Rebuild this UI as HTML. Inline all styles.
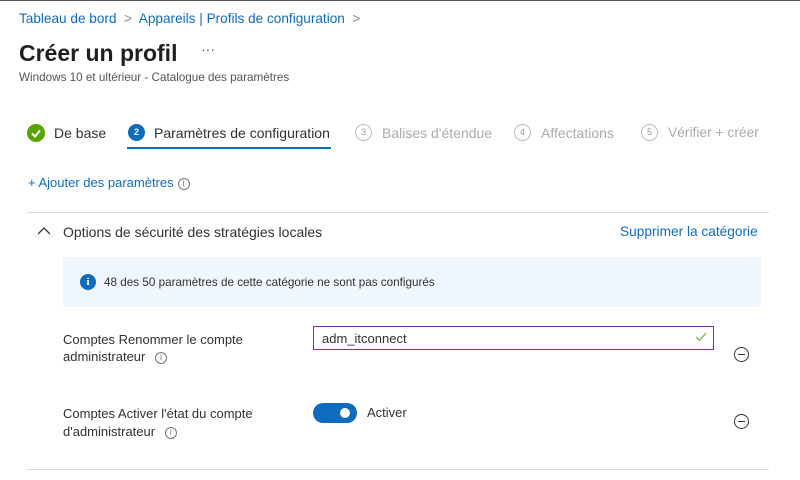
<!DOCTYPE html>
<html><head><meta charset="utf-8"><style>
*{margin:0;padding:0;box-sizing:border-box}
body{width:800px;height:480px;background:#fff;font-family:"Liberation Sans",sans-serif;color:#323130;position:relative;overflow:hidden;border-top:1px solid #555}
.a{position:absolute;white-space:nowrap}
.blue{color:#0f6cbd}
.circ{position:absolute;width:17px;height:17px;border-radius:50%;border:1px solid #bbb;color:#999;font-size:9px;text-align:center;line-height:15px}
.info{display:inline-block;width:12px;height:12px;border:1px solid #777;border-radius:50%;font-size:8px;line-height:10px;text-align:center;color:#666;vertical-align:middle;margin-left:4px}
.minus{position:absolute;width:15px;height:15px;border:1.3px solid #333;border-radius:50%}
.minus:after{content:"";position:absolute;left:3px;right:3px;top:6px;height:1.3px;background:#333}
</style></head><body>
<div class="a blue" style="left:19px;top:10px;font-size:13.6px">Tableau de bord <span style="color:#888">&nbsp;&gt;&nbsp;</span> Appareils | Profils de configuration <span style="color:#888">&nbsp;&gt;</span></div>
<div class="a" style="left:19px;top:39px;font-size:23px;font-weight:bold;color:#201f1e">Créer un profil</div>
<div class="a" style="left:201px;top:40px;font-size:14px;color:#555">···</div>
<div class="a" style="left:19px;top:70px;font-size:11.7px;color:#555">Windows 10 et ultérieur - Catalogue des paramètres</div>

<div class="a" style="left:27px;top:123px;width:18px;height:18px;border-radius:50%;background:#57a300"><svg width="18" height="18"><path d="M5 9.5l3 3 5-6" stroke="#fff" stroke-width="2" fill="none"/></svg></div>
<div class="a" style="left:54px;top:124px;font-size:14px">De base</div>
<div class="a" style="left:128px;top:123px;width:17px;height:17px;border-radius:50%;background:#0f6cbd;color:#fff;font-size:9px;text-align:center;line-height:17px;font-weight:bold">2</div>
<div class="a" style="left:154px;top:124px;font-size:14px">Paramètres de configuration</div>
<div class="a" style="left:127px;top:146px;width:204px;height:2px;background:#0f6cbd"></div>
<div class="circ" style="left:355px;top:123px">3</div>
<div class="a" style="left:382px;top:124px;font-size:14px;color:#aaa">Balises d'étendue</div>
<div class="circ" style="left:514px;top:123px">4</div>
<div class="a" style="left:541px;top:124px;font-size:14px;color:#aaa">Affectations</div>
<div class="circ" style="left:641px;top:123px">5</div>
<div class="a" style="left:668px;top:124px;font-size:13.8px;color:#aaa">Vérifier + créer</div>

<div class="a blue" style="left:28px;top:174px;font-size:13px">+ Ajouter des paramètres<span class="info">i</span></div>

<div class="a" style="left:27px;top:211px;width:742px;height:1px;background:#ddd"></div>
<svg class="a" style="left:37px;top:225px" width="14" height="10"><path d="M1 8l6-6 6 6" stroke="#333" stroke-width="1.3" fill="none"/></svg>
<div class="a" style="left:63px;top:223px;font-size:14px">Options de sécurité des stratégies locales</div>
<div class="a blue" style="left:620px;top:223px;font-size:13.7px">Supprimer la catégorie</div>

<div class="a" style="left:63px;top:256px;width:698px;height:50px;background:#eff6fe"></div>
<div class="a" style="left:80px;top:273px;width:16px;height:16px;border-radius:50%;background:#0f6cbd;color:#fff;font-size:11px;font-weight:bold;text-align:center;line-height:16px;font-family:'Liberation Serif',serif">i</div>
<div class="a" style="left:104px;top:275px;font-size:11.7px">48 des 50 paramètres de cette catégorie ne sont pas configurés</div>

<div class="a" style="left:63px;top:330px;font-size:13px;line-height:17px">Comptes Renommer le compte<br>administrateur <span class="info" style="margin-left:6px">i</span></div>
<div class="a" style="left:313px;top:325px;width:401px;height:24px;border:1px solid #8a2aa6"></div>
<div class="a" style="left:322px;top:330px;font-size:13px">adm_itconnect</div>
<svg class="a" style="left:695px;top:331px" width="12" height="10"><path d="M1 5l3.5 3.5L11 1" stroke="#6bb33a" stroke-width="1.2" fill="none"/></svg>
<div class="minus" style="left:734px;top:346px"></div>

<div class="a" style="left:63px;top:404px;font-size:13px;line-height:18px">Comptes Activer l'état du compte<br>d'administrateur <span class="info" style="margin-left:6px">i</span></div>
<div class="a" style="left:313px;top:402px;width:44px;height:20px;border-radius:10px;background:#0f6cbd"><div style="position:absolute;left:27px;top:5px;width:10px;height:10px;border-radius:50%;background:#fff"></div></div>
<div class="a" style="left:367px;top:404px;font-size:13px">Activer</div>
<div class="minus" style="left:734px;top:413px"></div>

<div class="a" style="left:27px;top:468px;width:742px;height:1px;background:#ddd"></div>
</body></html>
